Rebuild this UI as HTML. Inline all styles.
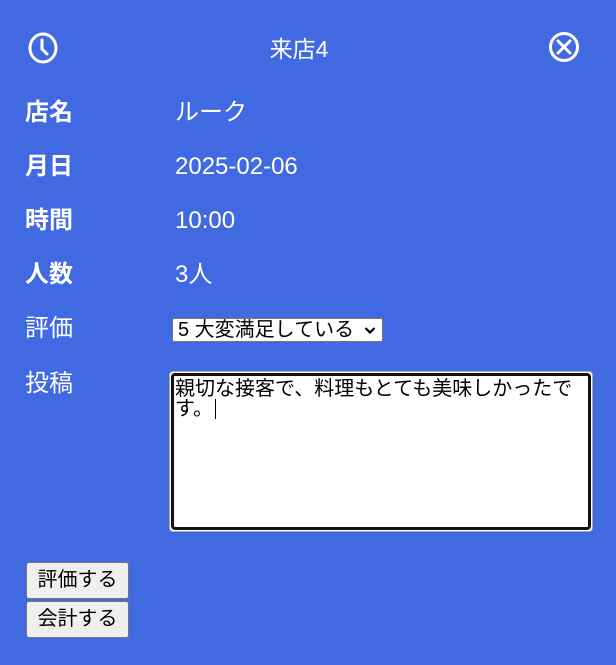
<!DOCTYPE html>
<html><head><meta charset="utf-8"><style>
html,body{margin:0;padding:0;width:616px;height:665px;background:#4169e1;overflow:hidden;font-family:"Liberation Sans","Noto Sans CJK JP",sans-serif;color:#fff}
.a{position:absolute;white-space:nowrap}
.l{left:25px;font-size:24px;line-height:28px}
.b{font-weight:bold}
.v{left:175px;font-size:24px;line-height:28px}
.btn{position:absolute;left:26px;width:101px;height:35px;background:#efefef;border:1px solid #767676;border-radius:3px;color:#000;font-size:20px;line-height:35px;text-align:center;box-sizing:content-box}
</style></head><body>
<svg class="a" style="left:27px;top:32px" width="32" height="32" viewBox="0 0 32 32"><ellipse cx="16" cy="16" rx="13" ry="14" fill="none" stroke="#fff" stroke-width="3"/><path d="M15 8 L15 17 L20 22" fill="none" stroke="#fff" stroke-width="3" stroke-linecap="round"/></svg>
<div class="a" style="left:0;width:598px;text-align:center;top:35px;font-size:23px;line-height:28px">来店4</div>
<svg class="a" style="left:548px;top:31px" width="32" height="32" viewBox="0 0 32 32"><circle cx="16" cy="16" r="13.5" fill="none" stroke="#fff" stroke-width="3"/><path d="M10 10 L22 22 M22 10 L10 22" stroke="#fff" stroke-width="3" stroke-linecap="round"/></svg>
<div class="a l b" style="top:99px">店名</div><div class="a v" style="top:99px">ルーク</div>
<div class="a l b" style="top:153px">月日</div><div class="a v" style="top:153px">2025-02-06</div>
<div class="a l b" style="top:207px">時間</div><div class="a v" style="top:207px">10:00</div>
<div class="a l b" style="top:261px">人数</div><div class="a v" style="top:261px">3人</div>
<div class="a l" style="top:315px">評価</div>
<div class="a" style="left:172px;top:318px;width:211px;height:24px;background:#fff;border:1px solid #767676;border-radius:2px;color:#000;font-size:20px;line-height:22px;padding-left:5px;box-sizing:border-box">5 大変満足している<svg style="position:absolute;right:6px;top:7px" width="12" height="9" viewBox="0 0 12 9"><path d="M1.5 2 L6 6.5 L10.5 2" fill="none" stroke="#000" stroke-width="2.2"/></svg></div>
<div class="a l" style="top:370px">投稿</div>
<div class="a" style="left:169px;top:371px;width:424px;height:161px;background:#fff;border-radius:4px;border:1px solid #aaa;box-sizing:border-box"></div>
<div class="a" style="left:171px;top:373px;width:420px;height:157px;border:3px solid #111;border-radius:4px;box-sizing:border-box;background:#fff;color:#000;font-size:20px;line-height:20px;padding:3px 0 0 1px;white-space:normal">親切な接客で、料理もとても美味しかったです。<span style="display:inline-block;width:1px;height:20px;background:#000;vertical-align:-4px;margin-left:2px"></span></div>
<div class="btn" style="top:562px">評価する</div>
<div class="btn" style="top:601px">会計する</div>
</body></html>
